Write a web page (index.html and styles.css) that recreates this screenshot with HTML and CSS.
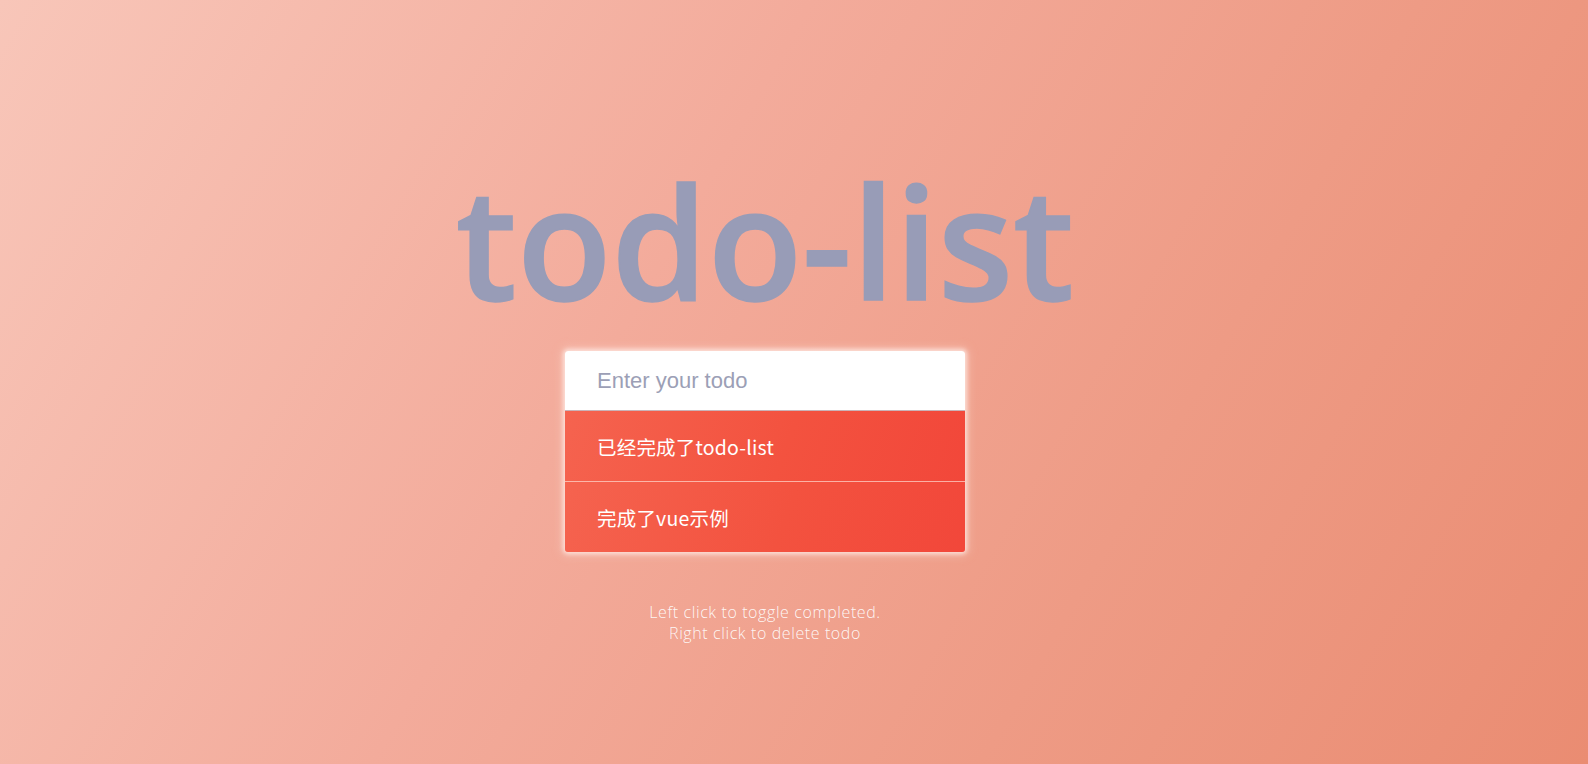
FILE: index.html
```html
<!DOCTYPE html>
<html lang="zh">
<head>
<meta charset="utf-8">
<title>todo-list</title>
<link rel="stylesheet" href="styles.css">
</head>
<body>
<div class="page">
  <h1 class="title">todo-list</h1>
  <div class="card">
    <input class="todo-input" type="text" placeholder="Enter your todo">
    <ul class="todos">
      <li class="todo">已经完成了todo-list</li>
      <li class="todo">完成了vue示例</li>
    </ul>
  </div>
  <p class="hint">Left click to toggle completed.<br>Right click to delete todo</p>
</div>
</body>
</html>
```

FILE: styles.css
```css
html, body {
  margin: 0;
  padding: 0;
  height: 100%;
}
body {
  background: linear-gradient(120deg, #f8c6b9 0%, #f3ab9b 40%, #ee9b85 70%, #ea8c72 100%);
  font-family: "Open Sans", "Noto Sans CJK SC", sans-serif;
  overflow: hidden;
}
.page {
  width: 1530px;
  display: flex;
  flex-direction: column;
  align-items: center;
  padding-top: 150px;
}
.title {
  margin: 0;
  font-family: "Open Sans", "Noto Sans CJK SC", sans-serif;
  font-weight: 600;
  font-size: 155px;
  line-height: 180px;
  letter-spacing: -0.2px;
  color: #989cb7;
  -webkit-text-stroke: 1.5px #989cb7;
}
.card {
  margin-top: 21px;
  width: 400px;
  border-radius: 3px;
  overflow: hidden;
  box-shadow: 0 0 4px 2px rgba(255, 238, 232, 0.75), 0 0 10px 4px rgba(255, 220, 210, 0.35);
}
.todo-input {
  display: block;
  box-sizing: border-box;
  width: 100%;
  height: 60px;
  border: none;
  border-bottom: 1px solid #c9b3b8;
  padding: 0 32px;
  font-family: "Liberation Sans", Arial, sans-serif;
  font-size: 22px;
  color: #555;
  background: #fff;
  outline: none;
}
.todo-input::placeholder {
  color: #9c9fb6;
}
.todos {
  list-style: none;
  margin: 0;
  padding: 0;
}
.todo {
  height: 70px;
  display: flex;
  align-items: center;
  padding: 0 32px;
  font-family: "Noto Sans CJK SC", sans-serif;
  font-size: 19.5px;
  letter-spacing: 0.2px;
  color: #fff;
  background: linear-gradient(110deg, #f5634f 0%, #f3523f 55%, #f2473a 100%);
}
.todo + .todo {
  border-top: 1px solid rgba(255, 220, 210, 0.7);
}
.hint {
  margin: 50px 0 0;
  text-align: center;
  font-family: "Open Sans", sans-serif;
  font-weight: 300;
  font-size: 16px;
  line-height: 21px;
  letter-spacing: 0.6px;
  color: rgba(255, 255, 255, 0.92);
}
```
